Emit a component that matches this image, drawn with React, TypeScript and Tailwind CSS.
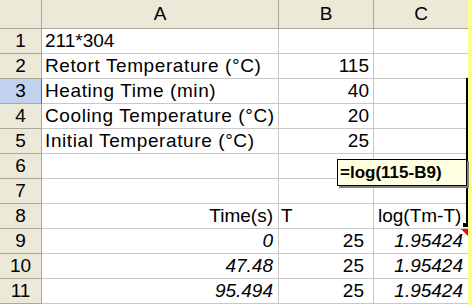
import React from "react";

const rows: { n: number; a?: string; aAlign?: "l" | "r"; aItalic?: boolean; aWide?: boolean; b?: string; bAlign?: "l" | "r"; bPad?: boolean; c?: string; cAlign?: "l" | "r"; cItalic?: boolean }[] = [
  { n: 1, a: "211*304", aAlign: "l" },
  { n: 2, a: "Retort Temperature (°C)", aAlign: "l", aWide: true, b: "115", bAlign: "r" },
  { n: 3, a: "Heating Time (min)", aAlign: "l", aWide: true, b: "40", bAlign: "r" },
  { n: 4, a: "Cooling Temperature (°C)", aAlign: "l", aWide: true, b: "20", bAlign: "r" },
  { n: 5, a: "Initial Temperature (°C)", aAlign: "l", aWide: true, b: "25", bAlign: "r" },
  { n: 6 },
  { n: 7 },
  { n: 8, a: "Time(s)", aAlign: "r", b: "T", bAlign: "l", c: "log(Tm-T)", cAlign: "l" },
  { n: 9, a: "0", aAlign: "r", aItalic: true, b: "25", bAlign: "r", bPad: true, c: "1.95424", cAlign: "r", cItalic: true },
  { n: 10, a: "47.48", aAlign: "r", aItalic: true, b: "25", bAlign: "r", bPad: true, c: "1.95424", cAlign: "r", cItalic: true },
  { n: 11, a: "95.494", aAlign: "r", aItalic: true, b: "25", bAlign: "r", bPad: true, c: "1.95424", cAlign: "r", cItalic: true },
];

export default function App() {
  return (
    <div
      className="relative w-[472px] h-[305px] overflow-hidden bg-white flex text-black"
      style={{ fontFamily: '"Liberation Sans", Arial, sans-serif' }}
    >
      <div className="w-[468px] flex flex-col">
        {/* header */}
        <div className="flex h-[29px] bg-[#ece9d8] border-b border-[#aca899] text-[19px] leading-[28px]">
          <div className="w-[42px] border-r border-[#aca899]" />
          <div className="w-[237px] border-r border-[#aca899] text-center">A</div>
          <div className="w-[95px] border-r border-[#aca899] text-center">B</div>
          <div className="w-[94px] text-center">C</div>
        </div>
        {rows.map((r) => (
          <div key={r.n} className="flex h-[25px] text-[19px] leading-[24px]">
            <div
              className={
                r.n === 3
                  ? "w-[42px] bg-[#c1d2ee] border-r border-b border-r-[#316ac5] border-b-[#aca899] text-center"
                  : "w-[42px] bg-[#ece9d8] border-r border-b border-[#aca899] text-center"
              }
            >
              {r.n}
            </div>
            <div
              className={
                "w-[237px] border-r border-b border-[#c8c8c8] whitespace-nowrap overflow-hidden " +
                (r.aAlign === "r" ? "text-right pr-[5px] " : "pl-[3px] ") +
                (r.aItalic ? "italic " : "") +
                (r.aWide ? "tracking-[0.6px]" : "")
              }
            >
              {r.a}
            </div>
            <div
              className={
                "w-[95px] border-r border-b border-[#c8c8c8] whitespace-nowrap " +
                (r.bAlign === "r" ? (r.bPad ? "text-right pr-[9px]" : "text-right pr-[4px]") : "pl-[2px]")
              }
            >
              {r.b}
            </div>
            <div
              className={
                "w-[94px] border-b border-[#c8c8c8] whitespace-nowrap " +
                (r.cAlign === "r" ? "text-right pr-[5px] " : "pl-[4px] ") +
                (r.cItalic ? "italic" : "")
              }
            >
              {r.c}
            </div>
          </div>
        ))}
      </div>
      <div className="w-[4px] bg-[#ffff8c]" />

      {/* selection / connector line */}
      <div className="absolute left-[466px] top-[78px] w-[2px] h-[149px] bg-black" />
      <div className="absolute left-[463px] top-[223px] w-[5px] h-[4px] bg-black" />
      {/* red comment indicator */}
      <svg className="absolute left-[461px] top-[229px]" width="7" height="7" viewBox="0 0 7 7">
        <polygon points="0,0 7,0 7,7" fill="#ff0000" />
      </svg>

      {/* comment box */}
      <div className="absolute left-[337px] top-[159px] w-[130px] h-[27px] bg-[#ffffe1] border border-black shadow-[2px_2px_0_#808080] flex items-center pl-[2px]">
        <span className="font-bold text-[17px] leading-none whitespace-nowrap">=log(115-B9)</span>
      </div>
    </div>
  );
}
